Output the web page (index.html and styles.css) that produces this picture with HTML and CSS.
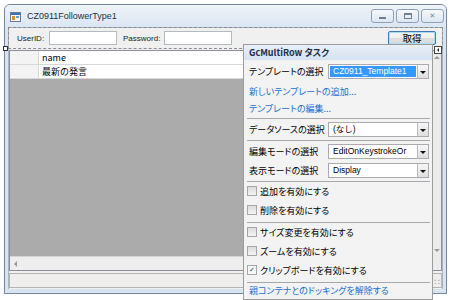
FILE: index.html
```html
<!DOCTYPE html>
<html lang="ja">
<head>
  <meta charset="UTF-8" />
  <title>CZ0911FollowerType1</title>
  <link rel="stylesheet" href="styles.css">
</head>
<body>
  <div class="window">
    <div class="titlebar">
      <svg class="app-icon" width="11" height="11" viewBox="0 0 11 11">
        <rect x="0.5" y="1.5" width="10" height="9" fill="#f4f4f4" stroke="#6a7c93"/>
        <rect x="1" y="2" width="9" height="2" fill="#3f6fb5"/>
        <rect x="2" y="5" width="3" height="4" fill="#e08a2c"/>
        <rect x="6" y="5" width="3" height="2" fill="#5aa3e0"/>
      </svg>
      <span class="title">CZ0911FollowerType1</span>
      <div class="caption-btns">
        <div class="cap-btn"><span class="glyph-min"></span></div>
        <div class="cap-btn"><span class="glyph-max"></span></div>
        <div class="cap-btn close">&#x2715;</div>
      </div>
    </div>

    <div class="client">
      <div class="toolbar">
        <span class="lbl">UserID:</span>
        <div class="textbox"></div>
        <span class="lbl pw">Password:</span>
        <div class="textbox"></div>
        <div class="spacer"></div>
        <div class="button">取得</div>
      </div>

      <div class="grid">
        <div class="grid-main">
          <div class="grid-row">
            <div class="rowhead"></div>
            <div class="cell">name</div>
          </div>
          <div class="grid-row">
            <div class="rowhead"></div>
            <div class="cell">最新の発言</div>
          </div>
          <div class="grid-empty"></div>
          <div class="hscroll"><span class="arrow-left"></span></div>
        </div>
        <div class="vscroll">
          <span class="arrow-up"></span>
          <span class="arrow-down"></span>
        </div>
      </div>

      <div class="statusbox">
        <span class="grip">&#x2237;</span>
      </div>
    </div>
  </div>

  <div class="handle"></div>
  <div class="tag-glyph"><span></span></div>

  <div class="tasks">
    <div class="tasks-head">GcMultiRow タスク</div>
    <div class="tasks-body">
      <div class="task-row tall">
        <span class="task-lbl">テンプレートの選択</span>
        <div class="combo selected"><span class="combo-text">CZ0911_Template1</span><span class="drop"></span></div>
      </div>
      <div class="task-link">新しいテンプレートの追加...</div>
      <div class="task-link">テンプレートの編集...</div>
      <div class="sep"></div>
      <div class="task-row">
        <span class="task-lbl">データソースの選択</span>
        <div class="combo"><span class="combo-text">(なし)</span><span class="drop"></span></div>
      </div>
      <div class="sep"></div>
      <div class="task-row">
        <span class="task-lbl">編集モードの選択</span>
        <div class="combo"><span class="combo-text">EditOnKeystrokeOr</span><span class="drop"></span></div>
      </div>
      <div class="task-row">
        <span class="task-lbl">表示モードの選択</span>
        <div class="combo"><span class="combo-text">Display</span><span class="drop"></span></div>
      </div>
      <div class="sep"></div>
      <div class="check-row"><span class="check"></span>追加を有効にする</div>
      <div class="check-row"><span class="check"></span>削除を有効にする</div>
      <div class="sep"></div>
      <div class="check-row"><span class="check"></span>サイズ変更を有効にする</div>
      <div class="check-row"><span class="check"></span>ズームを有効にする</div>
      <div class="check-row"><span class="check checked">&#x2713;</span>クリップボードを有効にする</div>
      <div class="sep"></div>
      <div class="task-link last">親コンテナとのドッキングを解除する</div>
    </div>
  </div>
</body>
</html>
```

FILE: styles.css
```css
body {
  margin: 0;
  background: #ffffff;
  font-family: "Liberation Sans", "Noto Sans CJK JP", sans-serif;
  font-size: 8px;
  color: #000;
  position: relative;
  width: 450px;
  height: 300px;
  overflow: hidden;
}
.window {
  margin: 4px 0 0 4px;
  border: 1px solid #7586a0;
  border-radius: 6px 6px 0 0;
  background: #d9e4f1;
  padding: 0 3px 4px 3px;
  box-sizing: border-box;
  width: 443px;
  height: 290px;
  display: flex;
  flex-direction: column;
}
.titlebar {
  height: 22px;
  display: flex;
  align-items: center;
  margin: 0 -3px;
  padding: 0 2px 0 5px;
  background: linear-gradient(#eef3f9, #dbe6f3);
  border-radius: 5px 5px 0 0;
}
.app-icon {
  margin-right: 6px;
}
.title {
  font-size: 9px;
  color: #1f2f44;
}
.caption-btns {
  margin-left: auto;
  display: flex;
  gap: 2px;
  align-self: flex-start;
  margin-top: 4px;
}
.cap-btn {
  width: 21px;
  height: 12px;
  border: 1px solid #8fa1b8;
  border-radius: 3px;
  background: linear-gradient(#f6f9fc, #dde6f0);
  display: flex;
  align-items: center;
  justify-content: center;
  font-family: "DejaVu Sans", sans-serif;
  font-size: 7px;
  color: #7a8696;
}
.glyph-min {
  width: 7px;
  height: 2px;
  margin-top: 4px;
  background: #6f7d8f;
}
.glyph-max {
  width: 6px;
  height: 3px;
  border: 1px solid #6f7d8f;
  border-top-width: 2px;
}
.client {
  flex: 1;
  background: #f0f0f0;
  border: 1px solid #a5b4c7;
  border-bottom: none;
  display: flex;
  flex-direction: column;
}
.toolbar {
  height: 20px;
  border: 1px dashed #8c8c8c;
  margin: -1px -1px 0 -1px;
  display: flex;
  align-items: center;
  padding: 0 6px 0 8px;
}
.lbl {
  color: #222;
  width: 32px;
}
.lbl.pw {
  margin-left: 6px;
  width: 41px;
}
.textbox {
  width: 66px;
  height: 12px;
  background: #fff;
  border: 1px solid #b5b9c0;
}
.spacer {
  flex: 1;
}
.button {
  width: 46px;
  height: 12px;
  border: 1px solid #3d7bad;
  border-radius: 2px;
  background: linear-gradient(#f2f2f2 50%, #dddddd 50%);
  box-shadow: inset 0 0 0 1px #a8dcf7;
  font-family: "Noto Sans CJK JP", sans-serif;
  font-size: 9.5px;
  line-height: 12px;
  text-align: center;
}
.grid {
  margin-top: 1px;
  height: 219px;
  border: 1px solid #8a8f99;
  display: flex;
}
.grid-main {
  flex: 1;
  display: flex;
  flex-direction: column;
}
.grid-row {
  height: 13px;
  display: flex;
  border-bottom: 1px solid #d8d8d8;
  background: #fff;
}
.rowhead {
  width: 28px;
  background: #f3f3f3;
  border-right: 1px solid #d8d8d8;
}
.cell {
  padding-left: 3px;
  font-family: "Noto Sans CJK JP", sans-serif;
  font-size: 9px;
  line-height: 13px;
}
.grid-empty {
  flex: 1;
  background: #ababab;
}
.hscroll {
  height: 13px;
  background: #eeeeee;
  border-top: 1px solid #d4d4d4;
  display: flex;
  align-items: center;
  padding-left: 4px;
}
.arrow-left {
  border: 3px solid transparent;
  border-right: 3px solid #9a9a9a;
  border-left: none;
}
.vscroll {
  width: 8px;
  background: #ececec;
  border-left: 1px solid #dcdcdc;
  display: flex;
  flex-direction: column;
  justify-content: space-between;
  align-items: center;
  padding: 5px 0 18px;
}
.arrow-up {
  border: 3px solid transparent;
  border-bottom: 3px solid #9a9a9a;
  border-top: none;
}
.arrow-down {
  border: 3px solid transparent;
  border-top: 3px solid #9a9a9a;
  border-bottom: none;
}
.statusbox {
  margin-top: 2px;
  height: 13px;
  border: 1px solid #b4b4b4;
  background: #f0eeec;
  display: flex;
  justify-content: flex-end;
  align-items: flex-end;
}
.grip {
  font-family: "DejaVu Sans", sans-serif;
  font-size: 9px;
  line-height: 9px;
  color: #9a9a9a;
  margin-right: 1px;
}
.handle {
  position: absolute;
  left: 3px;
  top: 46px;
  width: 3px;
  height: 3px;
  border: 1px solid #333;
  background: #fff;
}
.tag-glyph {
  position: absolute;
  left: 434px;
  top: 46px;
  width: 6px;
  height: 6px;
  border: 1px solid #444;
  background: #fff;
  display: flex;
  align-items: center;
  justify-content: center;
}
.tag-glyph span {
  border: 2px solid transparent;
  border-right: 2px solid #222;
  border-left: none;
}

/* smart tag panel */
.tasks {
  position: absolute;
  left: 243px;
  top: 44px;
  width: 190px;
  box-sizing: border-box;
  border: 1px solid #9c9c9c;
  background: #f3f3f3;
  font-family: "Noto Sans CJK JP", sans-serif;
  font-feature-settings: "palt";
  font-size: 9px;
  white-space: nowrap;
}
.tasks-head {
  height: 15px;
  line-height: 15px;
  padding-left: 5px;
  font-weight: bold;
  color: #1c2f4a;
  background: linear-gradient(#e8eff8, #d6e2f0);
}
.tasks-body {
  padding: 0 3px 0 5px;
}
.task-row {
  height: 19px;
  display: flex;
  align-items: center;
}
.task-row.tall {
  height: 23px;
}
.task-lbl {
  width: 79px;
  flex: none;
}
.combo {
  width: 101px;
  height: 15px;
  box-sizing: border-box;
  border: 1px solid #a9abb0;
  background: #fff;
  display: flex;
  align-items: center;
}
.combo-text {
  flex: 1;
  font-family: "Liberation Sans", "Noto Sans CJK JP", sans-serif;
  font-feature-settings: normal;
  font-size: 8.5px;
  line-height: 11px;
  padding-left: 3px;
  margin: 1px;
  overflow: hidden;
}
.combo.selected .combo-text {
  background: #3399ff;
  color: #fff;
}
.drop {
  width: 11px;
  height: 13px;
  box-sizing: border-box;
  border-left: 1px solid #b8bcc2;
  background: linear-gradient(#f7f7f7, #dedede);
  display: flex;
  align-items: center;
  justify-content: center;
}
.drop::after {
  content: "";
  border: 3px solid transparent;
  border-top: 3px solid #111;
  border-bottom: none;
  margin-top: 1px;
}
.task-link {
  height: 17px;
  line-height: 17px;
  color: #1a6fd2;
}
.task-link.last {
  height: 15px;
  line-height: 14px;
}
.sep {
  height: 1px;
  background: #a8a8a8;
  margin: 1px -1px 1px -2px;
}
.check-row {
  height: 19px;
  padding-bottom: 3px;
  box-sizing: border-box;
  display: flex;
  align-items: center;
  margin-left: -2px;
}
.check {
  width: 8px;
  height: 8px;
  border: 1px solid #a6a6a6;
  background: linear-gradient(#dcdcdc, #f4f4f4);
  margin-right: 3px;
  font-family: "DejaVu Sans", sans-serif;
  font-size: 7px;
  line-height: 8px;
  text-align: center;
  color: #2a3d5a;
  font-weight: bold;
}
.check.checked {
  background: #f8f8f8;
}
```
